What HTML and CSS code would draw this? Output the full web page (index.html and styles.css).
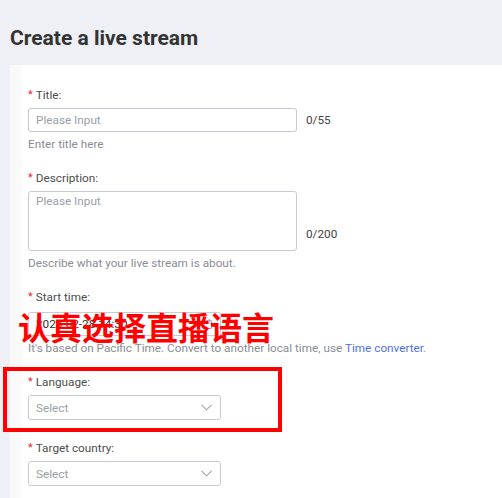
FILE: index.html
```html
<!DOCTYPE html>
<html lang="en">
<head>
<meta charset="utf-8">
<title>Create a live stream</title>
<link rel="stylesheet" href="styles.css">
</head>
<body>
<header class="page-head">
  <h1 class="page-title">Create a live stream</h1>
</header>
<main class="card">
  <div class="field">
    <label class="label"><span class="req">*</span>Title:</label>
    <div class="row">
      <div class="input wide"><span class="ph">Please Input</span></div>
      <span class="counter">0/55</span>
    </div>
    <div class="help">Enter title here</div>
  </div>

  <div class="field">
    <label class="label"><span class="req">*</span>Description:</label>
    <div class="row">
      <div class="textarea wide"><span class="ph">Please Input</span></div>
      <span class="counter bottom">0/200</span>
    </div>
    <div class="help">Describe what your live stream is about.</div>
  </div>

  <div class="field field-date">
    <label class="label"><span class="req">*</span>Start time:</label>
    <div class="input narrow date">
      <span class="val">2023-02-28 14:30</span>
      <svg class="cal" width="10" height="10" viewBox="0 0 10 10" fill="none" stroke="#a0a3ab" stroke-width="1">
        <rect x="0.5" y="1.5" width="9" height="8" rx="0.5"/>
        <path d="M0.5 4h9M3 0v3M7 0v3"/>
      </svg>
    </div>
    <div class="help">It's based on Pacific Time. Convert to another local time, use <a class="link" href="#">Time converter</a>.</div>
  </div>

  <div class="field field-lang">
    <label class="label"><span class="req">*</span>Language:</label>
    <div class="input narrow select">
      <span class="ph">Select</span>
      <svg class="chev" width="11" height="7" viewBox="0 0 11 7" fill="none" stroke="#a0a3ab" stroke-width="1.1">
        <path d="M0.5 0.8L5.5 5.8L10.5 0.8"/>
      </svg>
    </div>
  </div>

  <div class="field">
    <label class="label"><span class="req">*</span>Target country:</label>
    <div class="input narrow select">
      <span class="ph">Select</span>
      <svg class="chev" width="11" height="7" viewBox="0 0 11 7" fill="none" stroke="#a0a3ab" stroke-width="1.1">
        <path d="M0.5 0.8L5.5 5.8L10.5 0.8"/>
      </svg>
    </div>
  </div>
</main>

<div class="note">认真选择直播语言</div>
<div class="highlight"></div>
</body>
</html>
```

FILE: styles.css
```css
html, body {
  margin: 0;
  padding: 0;
}
body {
  background: #eef0f5;
  font-family: Roboto, "Liberation Sans", Arial, sans-serif;
  color: #4a4a4a;
  position: relative;
  height: 498px;
  overflow: hidden;
}
.page-head {
  height: 65px;
  padding-left: 10px;
  box-sizing: border-box;
  padding-top: 24px;
}
.page-title {
  margin: 0;
  font-size: 21px;
  line-height: 28px;
  font-weight: 700;
  color: #333333;
}
.card {
  display: block;
  margin-left: 10px;
  background: linear-gradient(to right, #fafafb 12px, #ffffff 12px);
  padding: 22px 0 40px 18px;
  min-height: 500px;
}
.field {
  margin-bottom: 18px;
}
.field-lang {
  margin-bottom: 20px;
}
.label {
  display: block;
  font-size: 11.75px;
  line-height: 16px;
  height: 16px;
  color: #4d4d4d;
  margin-bottom: 5px;
}
.field-date .label {
  margin-bottom: 7px;
}
.req {
  display: inline-block;
  color: #f5222d;
  font-size: 11px;
  line-height: 10px;
  margin-right: 3px;
  vertical-align: top;
  margin-top: 3px;
}
.row {
  display: flex;
  align-items: center;
}
.input, .textarea {
  box-sizing: border-box;
  border: 1px solid #c9cbd4;
  border-radius: 3px;
  background: #fff;
  font-size: 11.75px;
  line-height: 16px;
}
.input {
  height: 24px;
  padding: 3px 7px;
  display: flex;
  align-items: center;
}
.select {
  height: 25px;
}
.textarea {
  height: 60px;
  padding: 1px 7px;
}
.wide { width: 269px; }
.narrow { width: 193px; }
.ph { color: #9b9ea6; }
.val { color: #333; flex: 1; }
.select .ph { flex: 1; }
.chev { margin-right: 1px; }
.cal { margin-right: 1px; }
.counter {
  margin-left: 9px;
  font-size: 11.75px;
  line-height: 16px;
  color: #444;
}
.counter.bottom {
  align-self: flex-end;
  margin-bottom: 9px;
}
.help {
  margin-top: 4px;
  font-size: 11.75px;
  line-height: 16px;
  color: #8a8d94;
}
.link {
  color: #4e70ef;
  text-decoration: none;
}
.note {
  position: absolute;
  left: 18px;
  top: 310px;
  font-family: "Noto Sans CJK SC", sans-serif;
  font-weight: 700;
  font-size: 32px;
  line-height: 32px;
  color: #ff0000;
  white-space: nowrap;
}
.highlight {
  position: absolute;
  left: 3px;
  top: 367px;
  width: 279px;
  height: 65px;
  box-sizing: border-box;
  border: 4px solid #ff0000;
}
```
